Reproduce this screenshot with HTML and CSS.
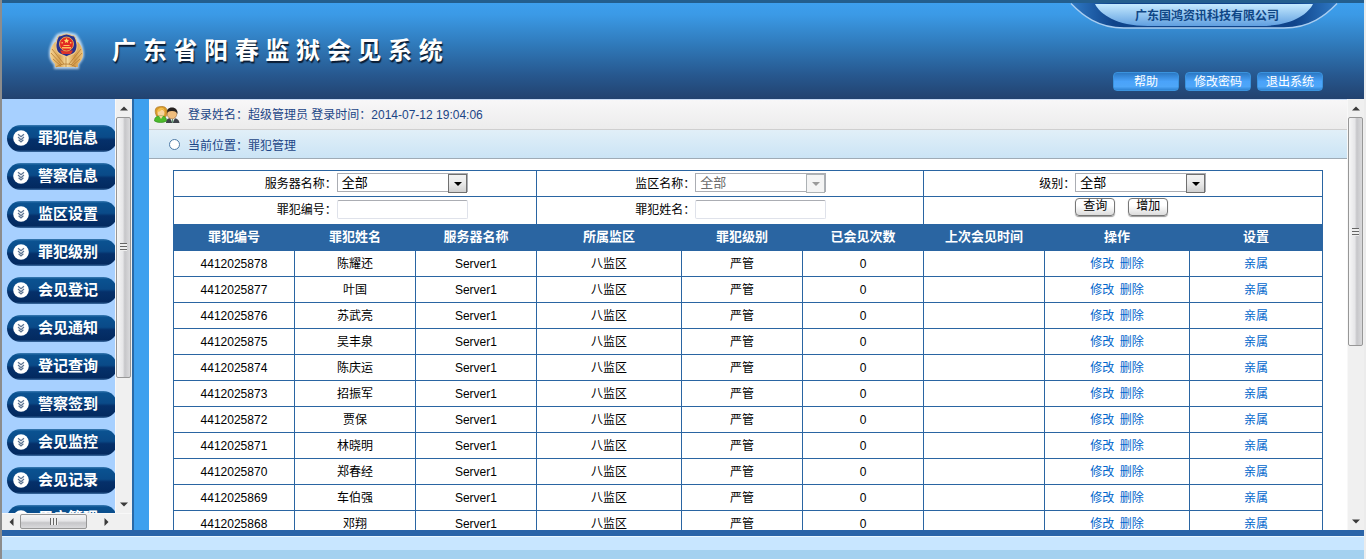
FILE: index.html
```html
<!DOCTYPE html>
<html lang="zh-CN">
<head>
<meta charset="utf-8">
<title>广东省阳春监狱会见系统</title>
<link rel="stylesheet" href="styles.css">
</head>
<body>
<svg class="defs" width="0" height="0" aria-hidden="true">
  <defs>
    <symbol id="chevrons" viewBox="0 0 16 16">
      <circle cx="8" cy="8" r="7.8" fill="#fff"/>
      <path d="M5 4.2l3 2.6 3-2.6M5 7l3 2.6L11 7M5.6 9.8L8 12l2.4-2.2" fill="none" stroke="#5c7391" stroke-width="1.2"/>
    </symbol>
    <symbol id="up" viewBox="0 0 8 5"><path d="M0 4.5L4 .5l4 4z" fill="#3a3a3a"/></symbol>
    <symbol id="down" viewBox="0 0 8 5"><path d="M0 .5h8l-4 4z" fill="#3a3a3a"/></symbol>
    <symbol id="left" viewBox="0 0 5 8"><path d="M4.500 0v8l-4-4z" fill="#3a3a3a"/></symbol>
    <symbol id="right" viewBox="0 0 5 8"><path d="M.5 0v8l4-4z" fill="#3a3a3a"/></symbol>
  </defs>
</svg>

<header class="top">
  <div class="brand">
    <svg class="emblem" width="40" height="40" viewBox="0 0 40 40" aria-hidden="true">
      <defs>
        <filter id="glow" x="-20%" y="-20%" width="140%" height="140%"><feGaussianBlur stdDeviation="1.2"/></filter>
        <linearGradient id="gold" x1="0" x2="1"><stop offset="0" stop-color="#f6d596"/><stop offset=".3" stop-color="#d9a250"/><stop offset=".5" stop-color="#f7dfa4"/><stop offset=".75" stop-color="#d59b4b"/><stop offset="1" stop-color="#eec67f"/></linearGradient>
      </defs>
      <path d="M19 1c4 0 6 1 10 2 5 6 8 13 8 20 0 5-3 8-5 11v4H7v-4c-3-3-5-6-5-11C2 16 5 9 10 3c3-1 5-2 9-2z" fill="#e9f4ff" opacity=".75" filter="url(#glow)"/>
      <path d="M8 11c-3 3-5 7-5 12 0 4 2 7 5 10v3h23v-3c3-3 5-6 5-10 0-5-2-9-5-12z" fill="url(#gold)"/>
      <path d="M5 18l12 15M4 22l11 12M6 28l8 7M34 18L22 33M35 22L24 34M33 28l-8 7M19 26v10M9 36c3-2 6-3 10-3s7 1 10 3" stroke="#b57c33" stroke-width=".8" fill="none"/>
      <path d="M19.500 3c3 0 5 2 8 2 3 5 4 13 0 17-2 2-5 2-8 4-3-2-6-2-8-4-4-4-3-12 0-17 3 0 5-2 8-2z" fill="#28308c" stroke="#edc98a" stroke-width="1.2"/>
      <path d="M13 19.500h13l-2 3.500h-9z" fill="#d9342b"/>
      <circle cx="19.500" cy="13" r="7" fill="#e22b24" stroke="#e9a24f" stroke-width="1"/>
      <path d="M19.500 7l.8 1.700 1.800.2-1.300 1.300.3 1.800-1.600-.9-1.600.9.3-1.800-1.300-1.300 1.800-.2z" fill="#ffd96a"/>
      <path d="M15 16h9v1.400h-9zM16.500 14h6v1h-6zM14.500 11h1.400v1.400h-1.400zM23 11h1.400v1.400H23z" fill="#ffc05a"/>
    </svg>
    <h1 class="title">广 东 省 阳 春 监 狱 会 见 系 统</h1>
  </div>
  <div class="side">
    <div class="company">
      <svg class="plate" viewBox="0 0 268 28" width="268" height="28" aria-hidden="true">
        <defs>
          <linearGradient id="wing" x1="0" x2="1"><stop offset="0" stop-color="#2f79c4"/><stop offset=".16" stop-color="#0f448b"/><stop offset=".84" stop-color="#0f448b"/><stop offset="1" stop-color="#2f79c4"/></linearGradient>
          <linearGradient id="pale" x1="0" x2="0" y1="0" y2="1"><stop offset="0" stop-color="#c5eaff"/><stop offset="1" stop-color="#609fe0"/></linearGradient>
        </defs>
        <path d="M1 0C12 12 28 25 54 25H214C240 25 256 12 267 0Z" fill="url(#wing)"/>
        <path d="M1 .5C12 12 28 25 54 25H214C240 25 256 12 267 .5" fill="none" stroke="#a9cdf0" stroke-width="1.4"/>
        <path d="M25 1C30 11 46 23 78 23H190C222 23 238 11 243 1Z" fill="url(#pale)"/>
      </svg>
      <span class="company-name">广东国鸿资讯科技有限公司</span>
    </div>
    <div class="tools">
      <button type="button" class="tool">帮助</button>
      <button type="button" class="tool">修改密码</button>
      <button type="button" class="tool">退出系统</button>
    </div>
  </div>
</header>

<div class="middle">
  <aside class="sidebar">
    <div class="side-row">
      <nav class="menu">
        <a class="item" href="#"><svg class="bullet"><use href="#chevrons"/></svg>罪犯信息</a>
        <a class="item" href="#"><svg class="bullet"><use href="#chevrons"/></svg>警察信息</a>
        <a class="item" href="#"><svg class="bullet"><use href="#chevrons"/></svg>监区设置</a>
        <a class="item" href="#"><svg class="bullet"><use href="#chevrons"/></svg>罪犯级别</a>
        <a class="item" href="#"><svg class="bullet"><use href="#chevrons"/></svg>会见登记</a>
        <a class="item" href="#"><svg class="bullet"><use href="#chevrons"/></svg>会见通知</a>
        <a class="item" href="#"><svg class="bullet"><use href="#chevrons"/></svg>登记查询</a>
        <a class="item" href="#"><svg class="bullet"><use href="#chevrons"/></svg>警察签到</a>
        <a class="item" href="#"><svg class="bullet"><use href="#chevrons"/></svg>会见监控</a>
        <a class="item" href="#"><svg class="bullet"><use href="#chevrons"/></svg>会见记录</a>
        <a class="item" href="#"><svg class="bullet"><use href="#chevrons"/></svg>用户管理</a>
      </nav>
      <div class="vbar">
        <span class="cap"><svg width="8" height="5"><use href="#up"/></svg></span>
        <span class="track"><span class="thumb thumb-side"><i class="grip"></i></span></span>
        <span class="cap"><svg width="8" height="5"><use href="#down"/></svg></span>
      </div>
    </div>
    <div class="hbar">
      <span class="hcap"><svg width="5" height="8"><use href="#left"/></svg></span>
      <span class="hthumb"><i class="hgrip"></i></span>
      <span class="hcap hcap-end"><svg width="5" height="8"><use href="#right"/></svg></span>
    </div>
  </aside>
  <div class="divider"></div>
  <main class="content">
    <div class="userbar">
      <svg class="people" width="26" height="18" viewBox="0 0 26 18" aria-hidden="true">
        <path d="M12 17c0-4 2-5 6-5s7 1 7.500 5z" fill="#3d4148"/>
        <path d="M16 12h5l-2.500 5z" fill="#fff"/>
        <path d="M18 13h1l.5 3-1 1-1-1z" fill="#697"/>
        <circle cx="18" cy="8" r="4.800" fill="#f0bd7c" stroke="#9c6a34" stroke-width=".6"/>
        <path d="M12.500 8c-.5-4 2-6.500 5.500-6.500s6 2.500 5.500 6.500c-1-2-2-3-5.500-3s-4.500 1-5.500 3z" fill="#26211f"/>
        <path d="M2.500 10C.5 6 .5 1 5 .8c4-1 8 0 8 4.200 0 3-.5 5-1.500 6z" fill="#d99a2b" stroke="#a46e17" stroke-width=".6"/>
        <circle cx="7" cy="7" r="3.500" fill="#f9d49b"/>
        <path d="M3 6c2 0 4-1 5-3 1 1 2 2 3 2-1-3-3-4-5-3S3 4 3 6z" fill="#f2c04d"/>
        <path d="M.5 15c0-4 2-5 6.500-5s5.500 2 5.500 5c-3 2-9 2-12 0z" fill="#4dbb2b" stroke="#2b8817" stroke-width=".6"/>
        <path d="M5 10h4l-2 3z" fill="#f9d49b"/>
      </svg>
      <span class="who">登录姓名：超级管理员 登录时间：2014-07-12 19:04:06</span>
    </div>
    <div class="crumb"><i class="ring"></i><span>当前位置：罪犯管理</span></div>
    <table class="grid">
      <colgroup>
        <col class="c-std"><col class="c-std"><col class="c-std"><col class="c-wide"><col class="c-std"><col class="c-std"><col class="c-std"><col class="c-wide"><col class="c-last">
      </colgroup>
      <tbody class="filters">
        <tr>
          <td colspan="3"><div class="field f1"><label for="server">服务器名称：</label><span class="pick"><select id="server"><option>全部</option></select></span></div></td>
          <td colspan="3"><div class="field f2"><label for="area">监区名称：</label><span class="pick off"><select id="area" disabled><option>全部</option></select></span></div></td>
          <td colspan="3"><div class="field f3"><label for="level">级别：</label><span class="pick"><select id="level"><option>全部</option></select></span></div></td>
        </tr>
        <tr class="second">
          <td colspan="3"><div class="field f1"><label for="code">罪犯编号：</label><input id="code" class="box" type="text"></div></td>
          <td colspan="3"><div class="field f2"><label for="name">罪犯姓名：</label><input id="name" class="box" type="text"></div></td>
          <td colspan="3"><div class="field f3"><span></span><span class="actions"><button type="button" class="btn">查询</button><button type="button" class="btn">增加</button></span></div></td>
        </tr>
      </tbody>
      <tbody class="rows">
        <tr><th>罪犯编号</th><th>罪犯姓名</th><th>服务器名称</th><th>所属监区</th><th>罪犯级别</th><th>已会见次数</th><th>上次会见时间</th><th>操作</th><th>设置</th></tr>
        <tr><td>4412025878</td><td>陈耀还</td><td>Server1</td><td>八监区</td><td>严管</td><td>0</td><td></td><td class="ops"><a href="#">修改</a> <a href="#">删除</a></td><td><a href="#">亲属</a></td></tr>
        <tr><td>4412025877</td><td>叶国</td><td>Server1</td><td>八监区</td><td>严管</td><td>0</td><td></td><td class="ops"><a href="#">修改</a> <a href="#">删除</a></td><td><a href="#">亲属</a></td></tr>
        <tr><td>4412025876</td><td>苏武亮</td><td>Server1</td><td>八监区</td><td>严管</td><td>0</td><td></td><td class="ops"><a href="#">修改</a> <a href="#">删除</a></td><td><a href="#">亲属</a></td></tr>
        <tr><td>4412025875</td><td>吴丰泉</td><td>Server1</td><td>八监区</td><td>严管</td><td>0</td><td></td><td class="ops"><a href="#">修改</a> <a href="#">删除</a></td><td><a href="#">亲属</a></td></tr>
        <tr><td>4412025874</td><td>陈庆运</td><td>Server1</td><td>八监区</td><td>严管</td><td>0</td><td></td><td class="ops"><a href="#">修改</a> <a href="#">删除</a></td><td><a href="#">亲属</a></td></tr>
        <tr><td>4412025873</td><td>招振军</td><td>Server1</td><td>八监区</td><td>严管</td><td>0</td><td></td><td class="ops"><a href="#">修改</a> <a href="#">删除</a></td><td><a href="#">亲属</a></td></tr>
        <tr><td>4412025872</td><td>贾保</td><td>Server1</td><td>八监区</td><td>严管</td><td>0</td><td></td><td class="ops"><a href="#">修改</a> <a href="#">删除</a></td><td><a href="#">亲属</a></td></tr>
        <tr><td>4412025871</td><td>林晓明</td><td>Server1</td><td>八监区</td><td>严管</td><td>0</td><td></td><td class="ops"><a href="#">修改</a> <a href="#">删除</a></td><td><a href="#">亲属</a></td></tr>
        <tr><td>4412025870</td><td>郑春经</td><td>Server1</td><td>八监区</td><td>严管</td><td>0</td><td></td><td class="ops"><a href="#">修改</a> <a href="#">删除</a></td><td><a href="#">亲属</a></td></tr>
        <tr><td>4412025869</td><td>车伯强</td><td>Server1</td><td>八监区</td><td>严管</td><td>0</td><td></td><td class="ops"><a href="#">修改</a> <a href="#">删除</a></td><td><a href="#">亲属</a></td></tr>
        <tr><td>4412025868</td><td>邓翔</td><td>Server1</td><td>八监区</td><td>严管</td><td>0</td><td></td><td class="ops"><a href="#">修改</a> <a href="#">删除</a></td><td><a href="#">亲属</a></td></tr>
      </tbody>
    </table>
  </main>
  <div class="vbar">
    <span class="cap"><svg width="8" height="5"><use href="#up"/></svg></span>
    <span class="track"><span class="thumb thumb-main"><i class="grip"></i></span></span>
    <span class="cap"><svg width="8" height="5"><use href="#down"/></svg></span>
  </div>
</div>
<footer class="bottom"></footer>
</body>
</html>
```
FILE: styles.css
```css
* { box-sizing: border-box; }

body {
  margin: 0;
  height: 100vh;
  display: flex;
  flex-direction: column;
  overflow: hidden;
  border-left: 2px solid #8c8c8c;
  border-right: 2px solid #ececec;
  font-family: "Liberation Sans", "Noto Sans CJK SC", sans-serif;
  font-size: 12px;
  color: #000;
  background: #fff;
}

button, input, select { font-family: inherit; }
a { text-decoration: none; }
.defs { position: absolute; }

/* header */
.top {
  flex: none;
  height: 99px;
  display: flex;
  justify-content: space-between;
  border-top: 3px solid #235e8e;
  background: linear-gradient(#3d9fee 0%, #3b9ae6 12%, #2f78b8 45%, #27588f 75%, #22426f 100%);
}
.brand {
  display: flex;
  align-items: center;
  gap: 25px;
  padding-left: 45px;
}
.title {
  margin: 0;
  font-size: 24px;
  font-weight: 700;
  line-height: 32px;
  color: #fff;
  text-shadow: 1px 2px 1px #0a1c33;
}
.side {
  display: flex;
  flex-direction: column;
  justify-content: space-between;
  padding: 0 26px 8px 0;
}
.company {
  position: relative;
  width: 268px;
  height: 28px;
  text-align: center;
}
.plate { position: absolute; left: 0; top: 0; }
.company-name {
  position: relative;
  padding-left: 6px;
  line-height: 26px;
  font-weight: 700;
  color: #0f4685;
}
.tools {
  display: flex;
  justify-content: flex-end;
  gap: 6px;
  padding-right: 15px;
}
.tool {
  width: 66px;
  height: 19px;
  padding: 0;
  border: 1px solid #3a93de;
  border-radius: 4px;
  background: linear-gradient(#2b78c4, #4aa3fa 50%, #4ea6f8 80%, #2f84d4);
  color: #fff;
  font-size: 12px;
  line-height: 16px;
}

/* frame */
.middle { flex: 1; min-height: 0; display: flex; }
.sidebar {
  flex: none;
  width: 130px;
  display: flex;
  flex-direction: column;
  background: #f0f0f0;
}
.side-row { flex: 1; min-height: 0; display: flex; }
.menu {
  flex: 1;
  min-width: 0;
  overflow: hidden;
  padding: 26px 0 0 5px;
  background: #a7d0ff;
}
.item {
  display: flex;
  align-items: center;
  gap: 9px;
  width: 110px;
  height: 27px;
  margin-bottom: 11px;
  padding: 0 0 1px 6px;
  border-radius: 14px;
  background: linear-gradient(#3a7cb4 0, #0a5291 8%, #0a4a88 45%, #05306a 55%, #032a60 92%, #3d6ea4 100%);
  color: #fff;
  font-size: 15px;
  font-weight: 700;
  line-height: 24px;
  white-space: nowrap;
}
.bullet { flex: none; width: 16px; height: 16px; }
.divider {
  flex: none;
  width: 17px;
  border-left: 2px solid #2a69a6;
  background: #3ea0ee;
}

/* scroll bars */
.vbar {
  flex: none;
  width: 17px;
  display: flex;
  flex-direction: column;
  background: #f0f0f0;
  border-left: 1px solid #f8f8f8;
}
.cap {
  height: 18px;
  display: flex;
  align-items: center;
  justify-content: center;
}
.track { flex: 1; min-height: 0; display: flex; flex-direction: column; }
.thumb {
  width: 15px;
  display: flex;
  align-items: center;
  justify-content: center;
  border: 1px solid #979797;
  border-radius: 2px;
  background: linear-gradient(90deg, #f6f6f6, #e6e6e8 45%, #c6c6c9 60%, #dadadc);
}
.thumb-side { height: 69%; }
.thumb-main { height: 58%; }
.grip {
  width: 7px;
  height: 8px;
  background: repeating-linear-gradient(#666 0 1px, #eee 1px 3px);
}
.hbar {
  flex: none;
  height: 17px;
  display: flex;
  padding-right: 17px;
  border-top: 1px solid #f8f8f8;
}
.hcap {
  width: 18px;
  display: flex;
  align-items: center;
  justify-content: center;
}
.hcap-end { margin-left: auto; }
.hthumb {
  width: 67px;
  height: 15px;
  display: flex;
  align-items: center;
  justify-content: center;
  border: 1px solid #979797;
  border-radius: 2px;
  background: linear-gradient(#f6f6f6, #e6e6e8 45%, #c6c6c9 60%, #dadadc);
}
.hgrip {
  width: 8px;
  height: 7px;
  background: repeating-linear-gradient(90deg, #666 0 1px, #eee 1px 3px);
}

/* content */
.content { flex: 1; min-width: 0; overflow: hidden; }
.userbar {
  height: 31px;
  display: flex;
  align-items: center;
  gap: 8px;
  padding-left: 5px;
  border-top: 1px solid #c9dcf5;
  border-bottom: 1px solid #cfcfcf;
  background: linear-gradient(#f8f7f8, #ececec);
  color: #1c4586;
}
.who { padding-bottom: 2px; }
.crumb {
  height: 29px;
  display: flex;
  align-items: center;
  gap: 8px;
  margin-bottom: 11px;
  padding-left: 20px;
  border-bottom: 1px solid #9fabb5;
  background: linear-gradient(#e1eff8, #cbe4f5);
  color: #1c4586;
}
.ring {
  width: 11px;
  height: 11px;
  border: 1px solid #4f7ba6;
  border-radius: 50%;
  background: #fff;
}
.grid {
  width: 96%;
  margin: 0 auto;
  table-layout: fixed;
  border-collapse: collapse;
}
.c-std { width: 121px; }
.c-wide { width: 145px; }
.c-last { width: 133px; }
.grid td, .grid th {
  height: 26px;
  padding: 0;
  border: 1px solid #2a65a2;
  text-align: center;
  line-height: 18px;
}
.grid th {
  padding-bottom: 2px;
  background: #2a65a2;
  color: #fff;
  font-size: 13px;
  font-weight: 700;
}
.rows a { color: #0066cc; }
.ops a + a { margin-left: 2px; }

.filters .second td { height: 28px; padding-bottom: 2px; }
.field {
  display: grid;
  align-items: center;
  text-align: left;
}
.field label { text-align: right; }
.f1 { grid-template-columns: 45% 1fr; }
.f2 { grid-template-columns: 41% 1fr; }
.f3 { grid-template-columns: 38% 1fr; }

.pick {
  position: relative;
  width: 131px;
  height: 19px;
  margin-top: -2px;
}
.pick select {
  display: block;
  width: 100%;
  height: 100%;
  padding: 0 4px;
  border: 1px solid #abadb3;
  border-radius: 0;
  appearance: none;
  background: #fff;
  color: #000;
  font-size: 13px;
  line-height: 17px;
  opacity: 1;
}
.pick::before {
  content: "";
  position: absolute;
  top: 1px;
  right: 1px;
  width: 17px;
  height: 17px;
  border: 1px solid #707070;
  background: linear-gradient(#f3f3f3, #e9e9e9 50%, #d0d0d0);
  pointer-events: none;
}
.pick::after {
  content: "";
  position: absolute;
  top: 9px;
  right: 6px;
  border: 4px solid transparent;
  border-top-color: #000;
  border-bottom: 0;
  pointer-events: none;
}
.pick.off select { color: #6d6d6d; }
.pick.off::before { border-color: #adb2b5; background: #f4f4f4; }
.pick.off::after { border-top-color: #9a9a9a; border-bottom: 0; }

.box {
  width: 131px;
  height: 19px;
  padding: 0 3px;
  border: 1px solid #dfe2ea;
  border-top-color: #abadb3;
  border-radius: 2px;
  background: #fff;
  font-size: 13px;
}
.actions { display: flex; gap: 13px; padding-bottom: 6px; }
.btn {
  width: 40px;
  height: 18px;
  padding: 0;
  border: 1px solid #777;
  border-radius: 4px;
  background: linear-gradient(#fff 40%, #dcdcdc);
  box-shadow: 0 1px 1px #999;
  color: #000;
  font-size: 12px;
  line-height: 15px;
}

.bottom {
  flex: none;
  height: 29px;
  border-top: 6px solid #2a64a8;
  background: linear-gradient(#e8f6ff 0 1px, #c8e6ff 1px 14px, #a4d1f0 14px);
}
```
